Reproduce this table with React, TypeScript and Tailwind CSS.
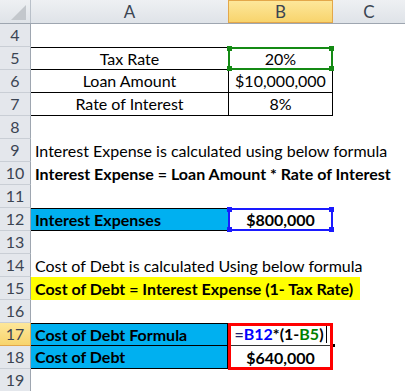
const font = { fontFamily: "Lato, 'Liberation Sans', sans-serif" };

function RowHead({ n, active }: { n: number; active?: boolean }) {
  return (
    <div
      className={
        "w-[31px] shrink-0 flex items-center justify-center border-r border-b text-[16px] " +
        (active
          ? "bg-gradient-to-b from-[#fde79a] to-[#f8d46c] border-r-[#e3a74a] border-b-[#e3a74a] text-[#3b4452]"
          : "bg-[#e4e7ec] border-r-[#9ea6b0] border-b-[#c9ced5] text-[#3b4452]")
      }
    >
      {n}
    </div>
  );
}

function Handles({ color }: { color: string }) {
  const c = "absolute w-[5px] h-[5px] " + color;
  return (
    <>
      <span className={c + " -left-[3px] -top-[3px]"} />
      <span className={c + " -right-[3px] -top-[3px]"} />
      <span className={c + " -left-[3px] -bottom-[3px]"} />
      <span className={c + " -right-[3px] -bottom-[3px]"} />
    </>
  );
}

export default function App() {
  return (
    <div className="w-[405px] h-[391px] overflow-hidden bg-white text-black text-[16px] leading-none" style={font}>
      {/* column headers */}
      <div className="flex h-[24px] border-b border-[#9ea6b0] bg-gradient-to-b from-[#eef0f3] to-[#dfe3e8] text-[#3b4452] text-[17px]">
        <div className="w-[31px] shrink-0 border-r border-[#b9c0c9] relative">
          <div className="absolute right-[4px] bottom-[3px] w-0 h-0 border-l-[15px] border-l-transparent border-b-[15px] border-b-[#c3c7cc]" />
        </div>
        <div className="w-[197px] shrink-0 flex items-center justify-center">A</div>
        <div className="w-[105px] shrink-0 flex items-center justify-center border border-[#e3a74a] bg-gradient-to-b from-[#fde79a] to-[#f8d46c]">
          B
        </div>
        <div className="flex-1 flex items-center justify-center">C</div>
      </div>

      {/* row 4 */}
      <div className="flex h-[23px]">
        <RowHead n={4} />
      </div>

      {/* rows 5-7 table */}
      <div className="flex h-[23px]">
        <RowHead n={5} />
        <div className="w-[197px] shrink-0 flex items-center justify-center border-t border-b border-black">Tax Rate</div>
        <div className="w-[105px] shrink-0 relative flex items-center justify-center border-t border-b border-r border-l border-black">
          20%
          <div className="absolute -left-px -top-px -right-px -bottom-px border-2 border-[#148a14]">
            <Handles color="bg-[#148a14]" />
          </div>
        </div>
      </div>
      <div className="flex h-[23px]">
        <RowHead n={6} />
        <div className="w-[197px] shrink-0 flex items-center justify-center border-b border-black">Loan Amount</div>
        <div className="w-[105px] shrink-0 flex items-center justify-center border-b border-r border-l border-black">$10,000,000</div>
      </div>
      <div className="flex h-[23px]">
        <RowHead n={7} />
        <div className="w-[197px] shrink-0 flex items-center justify-center border-b border-black">Rate of Interest</div>
        <div className="w-[105px] shrink-0 flex items-center justify-center border-b border-r border-l border-black">8%</div>
      </div>

      <div className="flex h-[23px]">
        <RowHead n={8} />
      </div>
      <div className="flex h-[23px]">
        <RowHead n={9} />
        <div className="pl-[4px] flex items-center whitespace-nowrap">Interest Expense is calculated using below formula</div>
      </div>
      <div className="flex h-[23px]">
        <RowHead n={10} />
        <div className="pl-[4px] flex items-center whitespace-nowrap font-bold">Interest Expense = Loan Amount * Rate of Interest</div>
      </div>
      <div className="flex h-[23px]">
        <RowHead n={11} />
      </div>

      {/* row 12 */}
      <div className="flex h-[23px]">
        <RowHead n={12} />
        <div className="w-[197px] shrink-0 flex items-center pl-[4px] bg-[#00b0f0] border-t border-b border-black font-bold">Interest Expenses</div>
        <div className="w-[105px] shrink-0 relative flex items-center justify-center font-bold">
          $800,000
          <div className="absolute inset-0 border-2 border-[#1a1aff]">
            <Handles color="bg-[#1a1aff]" />
          </div>
        </div>
      </div>

      <div className="flex h-[23px]">
        <RowHead n={13} />
      </div>
      <div className="flex h-[23px]">
        <RowHead n={14} />
        <div className="pl-[4px] flex items-center whitespace-nowrap">Cost of Debt is calculated Using below formula</div>
      </div>
      <div className="flex h-[23px]">
        <RowHead n={15} />
        <div className="w-[329px] shrink-0 pl-[4px] flex items-center whitespace-nowrap font-bold bg-[#ffff00]">
          Cost of Debt = Interest Expense (1- Tax Rate)
        </div>
      </div>
      <div className="flex h-[23px]">
        <RowHead n={16} />
      </div>

      {/* rows 17-18 */}
      <div className="relative">
        <div className="flex h-[23px]">
          <RowHead n={17} active />
          <div className="w-[197px] shrink-0 flex items-center pl-[4px] bg-[#00b0f0] border-t border-b border-r border-black font-bold">Cost of Debt Formula</div>
          <div className="w-[105px] shrink-0 relative flex items-center justify-center font-bold border-b border-[#333]">
            <span className="text-[#1f1f6b]">=</span>
            <span className="text-[#0000ff]">B12</span>
            <span>*(1-</span>
            <span className="text-[#008000]">B5</span>
            <span>)</span>
            <span className="ml-[2px] w-px h-[18px] bg-black" />
            <span className="absolute -right-[2px] -bottom-[2px] w-[3px] h-[3px] bg-black" />
          </div>
        </div>
        <div className="flex h-[23px]">
          <RowHead n={18} />
          <div className="w-[197px] shrink-0 flex items-center pl-[4px] bg-[#00b0f0] border-b border-r border-black font-bold">Cost of Debt</div>
          <div className="w-[105px] shrink-0 flex items-center justify-center font-bold">$640,000</div>
        </div>
        <div className="absolute left-[228px] top-0 w-[105px] h-[47px] border-[3px] border-[#ff0000] pointer-events-none" />
      </div>
      <div className="flex h-[23px]">
        <RowHead n={19} />
      </div>
    </div>
  );
}
